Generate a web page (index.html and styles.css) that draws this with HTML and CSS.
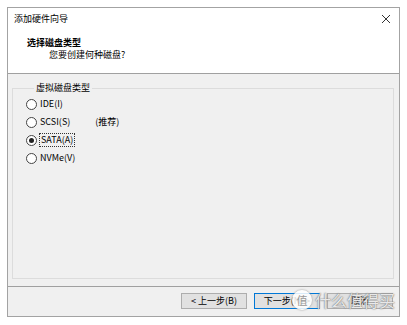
FILE: index.html
```html
<!DOCTYPE html>
<html>
<head>
    <title>添加硬件向导</title>
    <link rel="stylesheet" href="styles.css">
</head>
<body>
    <div class="window">
        <div class="titlebar">
            <span class="title">添加硬件向导</span>
            <svg class="close" width="10" height="10" viewBox="0 0 10 10">
                <path d="M1 1 L9 9 M9 1 L1 9" stroke="#333" stroke-width="1"/>
            </svg>
        </div>
        <div class="header">
            <div class="heading">选择磁盘类型</div>
            <div class="subheading">您要创建何种磁盘?</div>
        </div>
        <div class="content">
            <fieldset class="group">
                <legend>虚拟磁盘类型</legend>
                <label class="option"><input type="radio" name="disk"><span>IDE(I)</span></label>
                <label class="option"><input type="radio" name="disk"><span>SCSI(S)</span><span class="hint">(推荐)</span></label>
                <label class="option"><input type="radio" name="disk" checked><span class="focused">SATA(A)</span></label>
                <label class="option"><input type="radio" name="disk"><span>NVMe(V)</span></label>
            </fieldset>
        </div>
        <div class="buttons">
            <button class="btn">&lt; 上一步(B)</button>
            <button class="btn default">下一步(N) &gt;</button>
            <button class="btn">取消</button>
        </div>
    </div>
    <div class="watermark"><span class="logo">值</span>什么值得买</div>
</body>
</html>
```

FILE: styles.css
```css
body {
    margin: 0;
    background-color: #fff;
    font-family: "Noto Sans CJK SC", "Microsoft YaHei", sans-serif;
    font-size: 9px;
    color: #000;
}

.window {
    margin: 7px 0 0 7px;
    width: 391px;
    height: 308px;
    border: 1px solid #a3a3a3;
    background-color: #f0f0f0;
    display: flex;
    flex-direction: column;
}

.titlebar {
    height: 22px;
    background-color: #fff;
    display: flex;
    align-items: center;
    justify-content: space-between;
    padding: 0 8px 0 6px;
}

.title {
    line-height: 12px;
}

.header {
    height: 36px;
    background-color: #fff;
    padding: 7px 0 0 0;
    border-bottom: 1px solid #a0a0a0;
}

.heading {
    font-weight: bold;
    line-height: 12px;
    padding-left: 19px;
}

.subheading {
    line-height: 12px;
    padding-left: 41px;
}

.content {
    flex: 1;
    display: flex;
    flex-direction: column;
    padding: 8px 5px 7px 4px;
    border-bottom: 1px solid #a0a0a0;
}

.group {
    flex: 1;
    margin: 0;
    padding: 1px 0 0 13px;
    border: 1px solid #dcdcdc;
    min-width: 0;
}

.group legend {
    padding: 0 2px;
    margin-left: 8px;
    line-height: 12px;
}

.option {
    display: flex;
    align-items: center;
    height: 18px;
}

.option input {
    appearance: none;
    -webkit-appearance: none;
    width: 11px;
    height: 11px;
    margin: 0 3px 0 0;
    border: 1px solid #444;
    border-radius: 50%;
    background-color: #fff;
    box-sizing: border-box;
    position: relative;
}

.option input:checked::after {
    content: "";
    position: absolute;
    left: 2px;
    top: 2px;
    width: 5px;
    height: 5px;
    border-radius: 50%;
    background-color: #222;
}

.option span {
    line-height: 12px;
}

.hint {
    margin-left: 25px;
}

.focused {
    outline: 1px dotted #333;
    outline-offset: 0;
    padding: 0 1px;
}

.buttons {
    height: 29px;
    display: flex;
    justify-content: flex-end;
    align-items: flex-start;
    gap: 7px;
    padding: 6px 6px 0 0;
    box-sizing: border-box;
}

.btn {
    width: 66px;
    height: 16px;
    padding: 0;
    font-family: inherit;
    font-size: 9px;
    line-height: 12px;
    color: #000;
    background-color: #e1e1e1;
    border: 1px solid #adadad;
}

.btn.default {
    border-color: #0078d7;
}

.watermark {
    position: absolute;
    left: 292px;
    top: 290px;
    display: flex;
    align-items: center;
    gap: 3px;
    font-size: 16px;
    line-height: 20px;
    color: rgba(255, 255, 255, 0.85);
    text-shadow: 0 0 1px #666, 0 0 2px #888;
}

.logo {
    width: 20px;
    height: 20px;
    border-radius: 50%;
    background-color: rgba(255, 255, 255, 0.85);
    box-shadow: 0 0 2px #888;
    color: #999;
    text-shadow: none;
    font-size: 11px;
    display: flex;
    align-items: center;
    justify-content: center;
}
```
